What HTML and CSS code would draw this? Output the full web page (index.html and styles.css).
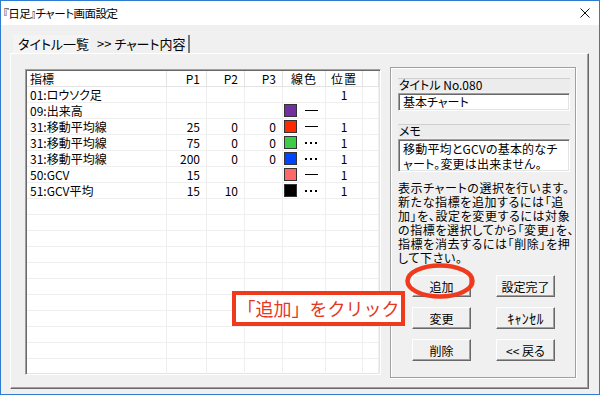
FILE: index.html
```html
<!DOCTYPE html>
<html lang="ja">
<head>
    <meta charset="UTF-8">
    <title>チャート画面設定</title>
    <link rel="stylesheet" href="styles.css">
</head>
<body>
    <div class="window">
        <div class="titlebar">
            <span class="title">『日足』チャート画面設定</span>
            <svg class="close" width="10" height="10" viewBox="0 0 10 10">
                <path d="M0.5 0.5 L9.5 9.5 M9.5 0.5 L0.5 9.5" stroke="#111" stroke-width="1" fill="none"/>
            </svg>
        </div>
        <div class="client">
            <div class="tabs">
                <div class="tab first">タイトル一覧</div>
                <div class="tab active">&gt;&gt; チャート内容</div>
            </div>
            <div class="tab-panel">
                <div class="list">
                    <div class="list-head">
                        <div class="hcell">指標</div>
                        <div class="hcell num">P1</div>
                        <div class="hcell num">P2</div>
                        <div class="hcell num">P3</div>
                        <div class="hcell center">線色</div>
                        <div class="hcell center">位置</div>
                        <div class="hcell"></div>
                    </div>
                    <div id="list-body"></div>
                </div>

                <div class="group">
                    <div class="field-label">タイトル No.080</div>
                    <div class="textbox">基本チャート</div>
                    <div class="field-label memo-label">メモ</div>
                    <div class="textbox memo">移動平均とGCVの基本的なチ<br>ャート。変更は出来ません。</div>
                    <p class="help">表示チャートの選択を行います。<br>新たな指標を追加するには「追<br>加」を、設定を変更するには対象<br>の指標を選択してから「変更」を、<br>指標を消去するには「削除」を押<br>して下さい。</p>
                    <div class="buttons">
                        <button class="btn">追加</button>
                        <button class="btn">設定完了</button>
                        <button class="btn">変更</button>
                        <button class="btn narrow-kana">ｷｬﾝｾﾙ</button>
                        <button class="btn">削除</button>
                        <button class="btn">&lt;&lt; 戻る</button>
                    </div>
                </div>
            </div>
        </div>

        <!-- annotation overlay -->
        <svg class="mark" width="72" height="38" viewBox="0 0 72 38">
            <ellipse cx="36" cy="19" rx="32.5" ry="15.5" fill="none" stroke="#f03a1e" stroke-width="4.5"/>
        </svg>
        <div class="callout">「追加」をクリック</div>
    </div>

    <script>
        const rows = [
            { name: "01:ロウソク足", p1: "", p2: "", p3: "", color: null, line: null, pos: "1" },
            { name: "09:出来高", p1: "", p2: "", p3: "", color: "#7030a0", line: "solid", pos: "" },
            { name: "31:移動平均線", p1: "25", p2: "0", p3: "0", color: "#ff2a00", line: "solid", pos: "1" },
            { name: "31:移動平均線", p1: "75", p2: "0", p3: "0", color: "#3ccc4a", line: "dot", pos: "1" },
            { name: "31:移動平均線", p1: "200", p2: "0", p3: "0", color: "#0044ff", line: "dot", pos: "1" },
            { name: "50:GCV", p1: "15", p2: "", p3: "", color: "#ff6868", line: "solid", pos: "1" },
            { name: "51:GCV平均", p1: "15", p2: "10", p3: "", color: "#000000", line: "dot", pos: "1" },
        ];
        const totalRows = 18;

        const listBody = document.getElementById('list-body');

        function createRow(row) {
            const el = document.createElement('div');
            el.classList.add('row');
            if (!row) {
                el.innerHTML = '<div class="cell"></div>'.repeat(7);
                return el;
            }
            let colorCell = '';
            if (row.color) {
                colorCell = `<span class="swatch" style="background:${row.color}"></span><span class="ls ls-${row.line}"></span>`;
            }
            el.innerHTML = `
                <div class="cell name">${row.name}</div>
                <div class="cell num">${row.p1}</div>
                <div class="cell num">${row.p2}</div>
                <div class="cell num">${row.p3}</div>
                <div class="cell color">${colorCell}</div>
                <div class="cell center">${row.pos}</div>
                <div class="cell"></div>
            `;
            return el;
        }

        for (let i = 0; i < totalRows; i++) {
            listBody.appendChild(createRow(rows[i]));
        }
    </script>
</body>
</html>
```

FILE: styles.css
```css
body {
    margin: 0;
    font-family: "Noto Sans CJK JP", "Noto Sans", sans-serif;
    font-size: 12px;
    font-feature-settings: "palt";
    color: #000;
    background: #fff;
}
.window {
    position: relative;
    width: 600px;
    height: 395px;
    box-sizing: border-box;
    border: 1px solid #2f7bd1;
    background: #f0f0f0;
    display: flex;
    flex-direction: column;
}
.titlebar {
    height: 24px;
    background: #fff;
    display: flex;
    align-items: center;
    justify-content: space-between;
    padding: 0 9px 0 2px;
}
.title {
    font-size: 11.5px;
    letter-spacing: -0.5px;
    color: #000;
}

.client {
    flex: 1;
    display: flex;
    flex-direction: column;
    padding: 10px 10px 5px 9px;
}
.tabs {
    display: flex;
    height: 18px;
    padding-left: 3px;
    gap: 3px;
}
.tab {
    box-sizing: border-box;
    line-height: 18px;
    font-size: 13px;
    padding-left: 5px;
    background: #f4f4f4;
    white-space: nowrap;
}
.tab.first {
    width: 77px;
}
.tab.active {
    width: 97px;
    padding-left: 4px;
    background: #f0f0f0;
    border-right: 2px solid #7a7a7a;
}
.tab-panel {
    flex: 1;
    display: flex;
    gap: 9px;
    padding: 13px 12px 0 14px;
    border: 1px solid;
    border-color: #fff #696969 #696969 #fff;
    box-shadow: inset -1px -1px #a0a0a0;
}

/* List view */
.list {
    width: 356px;
    height: 306px;
    box-sizing: border-box;
    margin-top: 2px;
    padding: 1px;
    background: #fff;
    border: 1px solid;
    border-color: #a0a0a0 #fff #fff #a0a0a0;
    box-shadow: inset 1px 1px #696969, inset -1px -1px #e3e3e3;
    overflow: hidden;
}
.list-head,
.row {
    display: grid;
    grid-template-columns: 140px 40px 38px 38px 43px 37px 16px;
    height: 16px;
}
.hcell,
.cell {
    box-sizing: border-box;
    height: 16px;
    line-height: 15px;
    white-space: nowrap;
    overflow: hidden;
}
.hcell {
    background: #fff;
    border-right: 1px solid #e3e3e3;
    border-bottom: 1px solid #e3e3e3;
    padding-left: 3px;
}
.cell {
    border-right: 1px solid #efefef;
    border-bottom: 1px solid #efefef;
}
.cell.name {
    padding-left: 3px;
}
.num {
    text-align: right;
    padding-right: 6px;
}
.hcell.num {
    padding-left: 0;
}
.center {
    text-align: center;
}
.hcell.center {
    padding-left: 0;
    letter-spacing: 1px;
}
.cell.color {
    display: flex;
    align-items: center;
    gap: 8px;
    padding-left: 1px;
}
.swatch {
    width: 13px;
    height: 13px;
    box-sizing: border-box;
    border: 1px solid #333;
}
.ls {
    width: 13px;
    height: 2px;
}
.ls-solid {
    background: #000;
    height: 1.5px;
}
.ls-dot {
    background: repeating-linear-gradient(90deg, #000 0 2px, transparent 2px 5px);
    width: 12px;
}

/* Right side group */
.group {
    width: 186px;
    height: 311px;
    box-sizing: border-box;
    border: 1px solid #a0a0a0;
    box-shadow: inset 1px 1px #fff, 1px 1px #fff;
    padding: 10px 5px 0 7px;
    display: flex;
    flex-direction: column;
}
.field-label {
    height: 13px;
    box-sizing: border-box;
    line-height: 12px;
    border-top: 1px solid #cfcfcf;
    background: #ececec;
    padding-left: 1px;
}
.memo-label {
    margin-top: 13px;
}
.textbox {
    margin-top: 2px;
    height: 18px;
    box-sizing: border-box;
    padding-left: 4px;
    line-height: 15px;
    background: #fff;
    border: 1px solid;
    border-color: #a0a0a0 #fff #fff #a0a0a0;
    box-shadow: inset 1px 1px #696969, inset -1px -1px #e3e3e3;
}
.textbox.memo {
    height: 33px;
    padding-top: 1px;
    line-height: 15px;
    letter-spacing: 0.2px;
}
.help {
    margin: 9px 0 0 0;
    line-height: 14px;
    letter-spacing: 0.6px;
    white-space: nowrap;
}
.buttons {
    display: grid;
    grid-template-columns: 59px 59px;
    grid-auto-rows: 22px;
    column-gap: 25px;
    row-gap: 10px;
    margin: 10px 0 0 14px;
}
.btn {
    font-family: inherit;
    font-size: 12px;
    font-feature-settings: "palt";
    padding: 0;
    color: #000;
    background: #f0f0f0;
    border: 1px solid;
    border-color: #fff #696969 #696969 #fff;
    box-shadow: inset -1px -1px #a0a0a0;
}
.btn.narrow-kana {
    font-feature-settings: normal;
    font-size: 14px;
    letter-spacing: 0.3px;
}

/* Annotation */
.mark {
    position: absolute;
    left: 403px;
    top: 261px;
}
.callout {
    position: absolute;
    left: 231px;
    top: 290px;
    width: 173px;
    height: 35px;
    box-sizing: border-box;
    border: 4px solid #f03a1e;
    background: #fff;
    color: #e8371d;
    font-size: 18px;
    font-feature-settings: normal;
    line-height: 26px;
    text-align: center;
}
```
